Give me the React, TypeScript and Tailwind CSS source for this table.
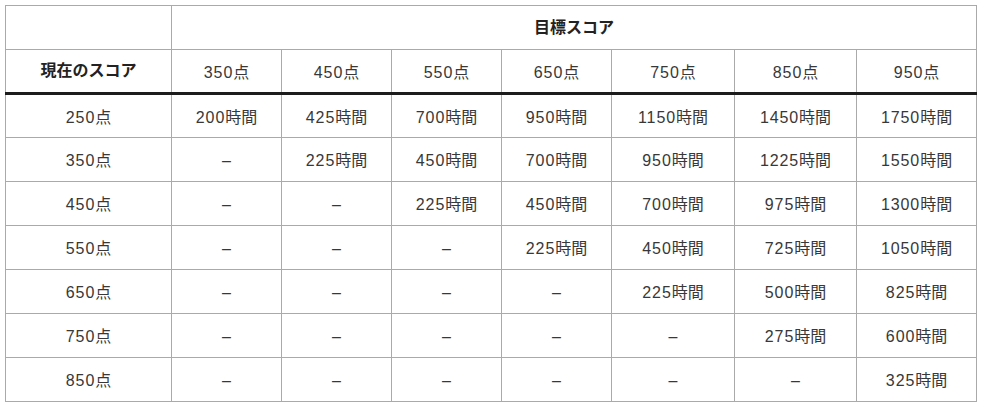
import React from "react";

const targets = [350, 450, 550, 650, 750, 850, 950];

const rows: { from: number; hours: (number | null)[] }[] = [
  { from: 250, hours: [200, 425, 700, 950, 1150, 1450, 1750] },
  { from: 350, hours: [null, 225, 450, 700, 950, 1225, 1550] },
  { from: 450, hours: [null, null, 225, 450, 700, 975, 1300] },
  { from: 550, hours: [null, null, null, 225, 450, 725, 1050] },
  { from: 650, hours: [null, null, null, null, 225, 500, 825] },
  { from: 750, hours: [null, null, null, null, null, 275, 600] },
  { from: 850, hours: [null, null, null, null, null, null, 325] },
];

const colWidths = ["w-[166px]", "w-[110px]", "w-[110px]", "w-[110px]", "w-[110px]", "w-[123px]", "w-[122px]", "w-[120px]"];

const cell = "border border-[#aaa] h-[44px] p-0 text-center align-middle";
const numCell = `${cell} pt-[3px]`;

function Num({ n, unit }: { n: number; unit: string }) {
  return (
    <>
      <span className="tracking-[0.9px]">{n}</span>
      {unit}
    </>
  );
}

export default function App() {
  return (
    <div
      className="min-h-[410px] w-[985px] bg-white pl-[5px] pt-[5px] text-[16px] text-[#383838]"
      style={{ fontFamily: '"Liberation Sans", "Noto Sans CJK JP", sans-serif' }}
    >
      <table className="w-[971px] table-fixed border-collapse">
        <colgroup>
          {colWidths.map((w, i) => (
            <col key={i} className={w} />
          ))}
        </colgroup>
        <thead>
          <tr>
            <th className={cell}></th>
            <th colSpan={7} className={`${cell} font-bold text-[#222]`}>
              目標スコア
            </th>
          </tr>
          <tr>
            <th className={`${cell} border-b-[3px] border-b-[#1c1c1c] font-bold text-[#222]`}>
              現在のスコア
            </th>
            {targets.map((t) => (
              <th key={t} className={`${numCell} border-b-[3px] border-b-[#1c1c1c] font-normal`}>
                <Num n={t} unit="点" />
              </th>
            ))}
          </tr>
        </thead>
        <tbody>
          {rows.map((r) => (
            <tr key={r.from}>
              <td className={numCell}>
                <Num n={r.from} unit="点" />
              </td>
              {r.hours.map((h, i) => (
                <td key={i} className={numCell}>
                  {h === null ? "–" : <Num n={h} unit="時間" />}
                </td>
              ))}
            </tr>
          ))}
        </tbody>
      </table>
    </div>
  );
}
